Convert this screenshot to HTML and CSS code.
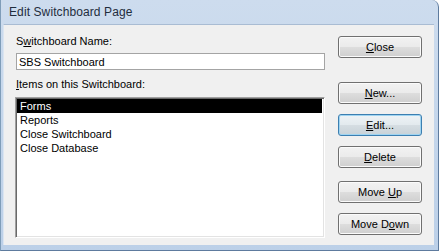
FILE: index.html
```html
<!DOCTYPE html>
<html lang="en">
<head>
  <meta charset="UTF-8" />
  <title>Edit Switchboard Page</title>
  <link rel="stylesheet" href="styles.css">
</head>
<body>
  <div class="window">
    <div class="titlebar">Edit Switchboard Page</div>
    <div class="client">
      <div class="main">
        <label class="field-label" for="sbName">S<u>w</u>itchboard Name:</label>
        <input type="text" id="sbName" class="textbox" value="SBS Switchboard" />
        <div class="field-label list-label"><u>I</u>tems on this Switchboard:</div>
        <ul class="listbox">
          <li class="selected">Forms</li>
          <li>Reports</li>
          <li>Close Switchboard</li>
          <li>Close Database</li>
        </ul>
      </div>
      <div class="buttons">
        <button type="button" class="btn btn-close"><u>C</u>lose</button>
        <button type="button" class="btn btn-new"><u>N</u>ew...</button>
        <button type="button" class="btn btn-gap focused"><u>E</u>dit...</button>
        <button type="button" class="btn btn-gap"><u>D</u>elete</button>
        <button type="button" class="btn btn-up">Move <u>U</u>p</button>
        <button type="button" class="btn btn-gap">Move D<u>o</u>wn</button>
      </div>
    </div>
  </div>
</body>
</html>
```

FILE: styles.css
```css
* {
  box-sizing: border-box;
}

body {
  margin: 0;
  font-family: "Liberation Sans", Arial, sans-serif;
  font-size: 11px;
  color: #000;
  background: #fff;
}

.window {
  width: 439px;
  height: 251px;
  display: flex;
  flex-direction: column;
  background: linear-gradient(#cddcee, #bcd0e8);
  border-left: 1px solid #7f9db9;
  border-right: 1px solid #5e7b9e;
  border-bottom: 1px solid #5e7b9e;
  border-top-right-radius: 7px;
  padding: 0 4px 5px 2px;
}

.titlebar {
  height: 24px;
  padding: 5px 0 0 6px;
  font-size: 12px;
  color: #1f2d3d;
  letter-spacing: 0.1px;
}

.client {
  flex: 1;
  display: flex;
  gap: 13px;
  background: #f0f0f0;
  border-top: 1px solid #a9bcd3;
  border-left: 1px solid #dbe5f1;
  padding: 0 12px 0 11px;
}

.main {
  width: 311px;
  display: flex;
  flex-direction: column;
}

.field-label {
  display: block;
  height: 13px;
  line-height: 13px;
  margin-top: 10px;
  padding-left: 1px;
}

.textbox {
  margin-top: 5px;
  margin-left: 1px;
  width: 309px;
  height: 17px;
  padding: 0 2px;
  border: 1px solid #a4a4a4;
  background: #fff;
  font-family: inherit;
  font-size: 11px;
  color: #000;
}

.list-label {
  margin-top: 8px;
}

.listbox {
  list-style: none;
  margin: 6px 0 0;
  padding: 0;
  height: 141px;
  background: #fff;
  border-top: 1px solid #a0a0a0;
  border-left: 1px solid #a0a0a0;
  border-right: 1px solid #ffffff;
  border-bottom: 1px solid #ffffff;
  box-shadow: inset 1px 1px 0 #696969, inset -1px -1px 0 #e3e3e3;
  padding: 1px 2px 1px 1px;
}

.listbox li {
  height: 14px;
  line-height: 14px;
  padding-left: 3px;
}

.listbox .selected {
  background: #000;
  color: #fff;
}

.buttons {
  width: 84px;
  display: flex;
  flex-direction: column;
}

.btn {
  width: 84px;
  height: 22px;
  padding: 0;
  font-family: inherit;
  font-size: 11px;
  color: #000;
  border: 1px solid #707070;
  border-radius: 3px;
  background: linear-gradient(#f2f2f2 0%, #ebebeb 48%, #dddddd 52%, #cfcfcf 100%);
  box-shadow: inset 0 0 0 1px #fbfbfb;
}

.btn-close { margin-top: 11px; }
.btn-new { margin-top: 24px; }
.btn-gap { margin-top: 10px; }
.btn-up { margin-top: 13px; }

.btn.focused {
  border-color: #3c7fb1;
  background: linear-gradient(#eef3f6 0%, #e3eaee 48%, #d5dde2 52%, #c8d2d8 100%);
  box-shadow: inset 0 0 0 1px #9fd4f1;
}
```
